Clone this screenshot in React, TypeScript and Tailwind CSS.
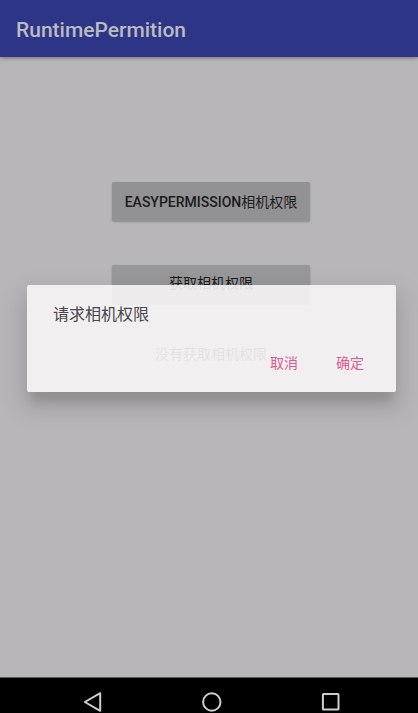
import React from "react";

const raised =
  "h-[39px] w-[198px] rounded-[2px] text-sm text-[#1b1a1c] shadow-[0_1px_2px_rgba(0,0,0,0.25)]";
const flat = "h-9 w-16 rounded-[2px] text-center text-sm text-[#dc5c8f]";
const navIcon = "block h-5 w-5 fill-none stroke-[#cfcdd0] stroke-2";

function PermissionDialog() {
  return (
    <div className="absolute inset-0 flex items-center pl-[27px] pr-[22px]">
      <section
        role="dialog"
        aria-labelledby="dialog-title"
        className="w-full rounded-[2px] bg-[#f9f7f8]/88 pb-[11px] pl-[26px] pr-[14px] pt-[18px] shadow-[0_14px_8px_-4px_rgba(0,0,0,0.1),0_12px_24px_6px_rgba(0,0,0,0.13)]"
      >
        <h2 id="dialog-title" className="text-base leading-6 text-[#48464a]">
          请求相机权限
        </h2>
        <div className="mt-[18px] flex justify-end gap-[2px]">
          <button type="button" className={flat}>
            取消
          </button>
          <button type="button" className={flat}>
            确定
          </button>
        </div>
      </section>
    </div>
  );
}

function NavigationBar() {
  return (
    <nav className="flex h-9 shrink-0 justify-center gap-[99px] overflow-hidden border-t border-[#5b5a5c] bg-black pl-[5px] pt-[14px]">
      <button type="button" aria-label="Back" className="h-5 w-5">
        <svg viewBox="0 0 20 20" className={navIcon}>
          <path d="M17.2 1.2v17.6L1.8 10z" strokeLinejoin="round" />
        </svg>
      </button>
      <button type="button" aria-label="Home" className="h-5 w-5">
        <svg viewBox="0 0 20 20" className={navIcon}>
          <circle cx="9.8" cy="10" r="8.7" />
        </svg>
      </button>
      <button type="button" aria-label="Recent apps" className="h-5 w-5">
        <svg viewBox="0 0 20 20" className={navIcon}>
          <rect x="1.9" y="2" width="15.6" height="15.6" rx="0.6" />
        </svg>
      </button>
    </nav>
  );
}

export default function App() {
  return (
    <div className="flex h-screen flex-col bg-[#b8b6b9] font-['Roboto','Noto_Sans_CJK_SC',sans-serif]">
      <div className="relative flex flex-1 flex-col">
        <header className="flex h-[57px] shrink-0 items-center bg-[#2d3686] px-4 pt-1 shadow-[0_1px_4px_rgba(0,0,0,0.4)]">
          <h1 className="text-[21px] font-medium text-[#bcbac3]">RuntimePermition</h1>
        </header>
        <main className="flex flex-1 flex-col items-center pl-1 pt-[125px]">
          <button type="button" className={`${raised} bg-[#929193]`}>
            <span className="font-medium">EASYPERMISSION</span>相机权限
          </button>
          <button type="button" className={`${raised} mt-11 bg-[#98979a] pb-1`}>
            获取相机权限
          </button>
          <p className="mt-10 text-sm leading-5 text-[#4a494b]">没有获取相机权限</p>
        </main>
        <PermissionDialog />
      </div>
      <NavigationBar />
    </div>
  );
}
